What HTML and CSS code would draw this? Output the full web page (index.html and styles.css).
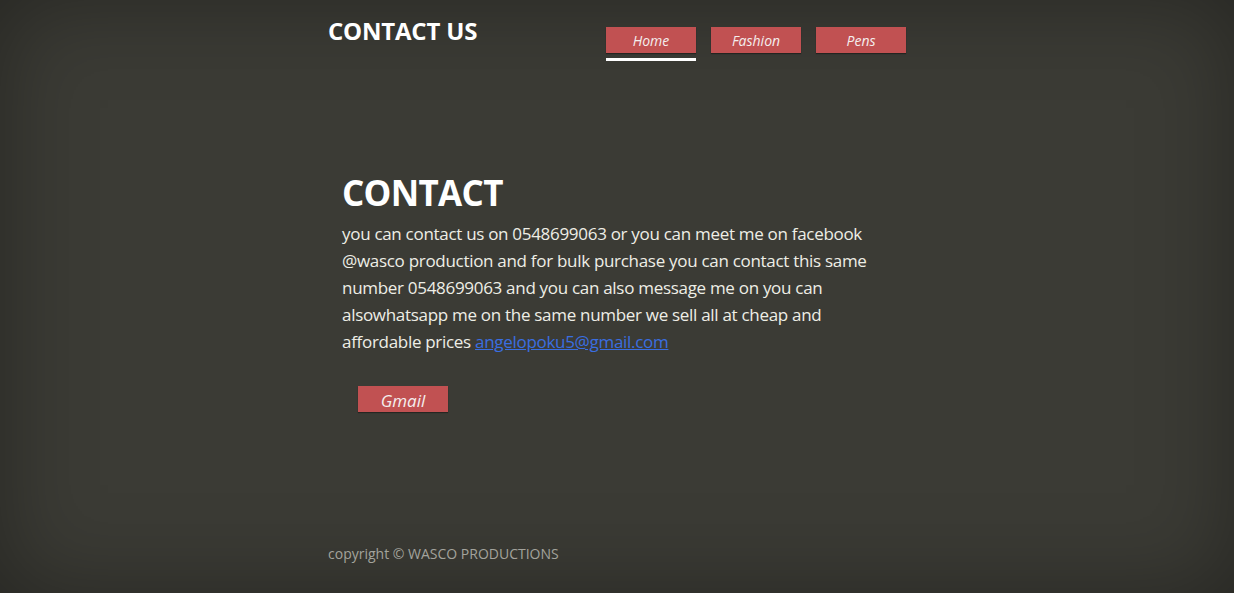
FILE: index.html
```html
<!DOCTYPE html>
<html lang="en">
<head>
<meta charset="utf-8">
<title>Contact Us</title>
<link rel="stylesheet" href="styles.css">
</head>
<body>
<div class="page">
  <header class="header">
    <h1 class="brand">CONTACT US</h1>
    <nav class="nav">
      <a class="nav-btn active" href="#">Home</a>
      <a class="nav-btn" href="#">Fashion</a>
      <a class="nav-btn" href="#">Pens</a>
    </nav>
  </header>
  <main class="contact">
    <h2 class="contact-title">CONTACT</h2>
    <p class="contact-text">you can contact us on 0548699063 or you can meet me on facebook @wasco production and for bulk purchase you can contact this same number 0548699063 and you can also message me on you can alsowhatsapp me on the same number we sell all at cheap and affordable prices <a class="mail-link" href="#">angelopoku5@gmail.com</a></p>
    <a class="gmail-btn" href="#">Gmail</a>
  </main>
  <footer class="footer">copyright © WASCO PRODUCTIONS</footer>
</div>
</body>
</html>
```
FILE: styles.css
```css
html, body {
  margin: 0;
  height: 100%;
}
body {
  background: #3b3b35;
  box-shadow: inset 0 0 90px rgba(0, 0, 0, 0.35);
  font-family: "Open Sans", "Noto Sans", sans-serif;
  color: #f2f2ee;
  min-height: 593px;
  box-sizing: border-box;
}
.page {
  width: 578px;
  margin: 0 auto;
  padding-top: 14px;
  display: flex;
  flex-direction: column;
}
.header {
  display: flex;
  justify-content: space-between;
  align-items: flex-start;
}
.brand {
  margin: 0;
  font-size: 24px;
  font-weight: 700;
  letter-spacing: -0.2px;
  line-height: 34px;
  color: #fff;
}
.nav {
  display: flex;
  gap: 15px;
  padding-top: 13px;
}
.nav-btn {
  display: block;
  width: 90px;
  height: 26px;
  line-height: 28px;
  text-align: center;
  background: #c15152;
  box-shadow: 0 1px 1px rgba(0, 0, 0, 0.35);
  color: #f4eeee;
  font-style: italic;
  font-size: 14px;
  text-decoration: none;
  position: relative;
}
.nav-btn.active::after {
  content: "";
  position: absolute;
  left: 0;
  right: 0;
  top: 31px;
  height: 3px;
  background: #fff;
}
.contact {
  padding: 118px 0 0 14px;
}
.contact-title {
  margin: 0;
  font-size: 35px;
  font-weight: 700;
  line-height: 44px;
  letter-spacing: -0.7px;
  color: #fff;
}
.contact-text {
  margin: 5px 0 0;
  width: 540px;
  font-size: 17px;
  line-height: 27px;
  letter-spacing: -0.3px;
  color: #eeeee6;
}
.mail-link {
  color: #3a6ee0;
}
.gmail-btn {
  display: block;
  margin: 31px 0 0 16px;
  width: 90px;
  height: 26px;
  line-height: 30px;
  text-align: center;
  background: #c15152;
  box-shadow: 0 1px 1px rgba(0, 0, 0, 0.35);
  color: #f4eeee;
  font-style: italic;
  font-size: 17px;
  text-decoration: none;
}
.footer {
  margin-top: 132px;
  font-size: 14px;
  color: #a3a39c;
}
```
